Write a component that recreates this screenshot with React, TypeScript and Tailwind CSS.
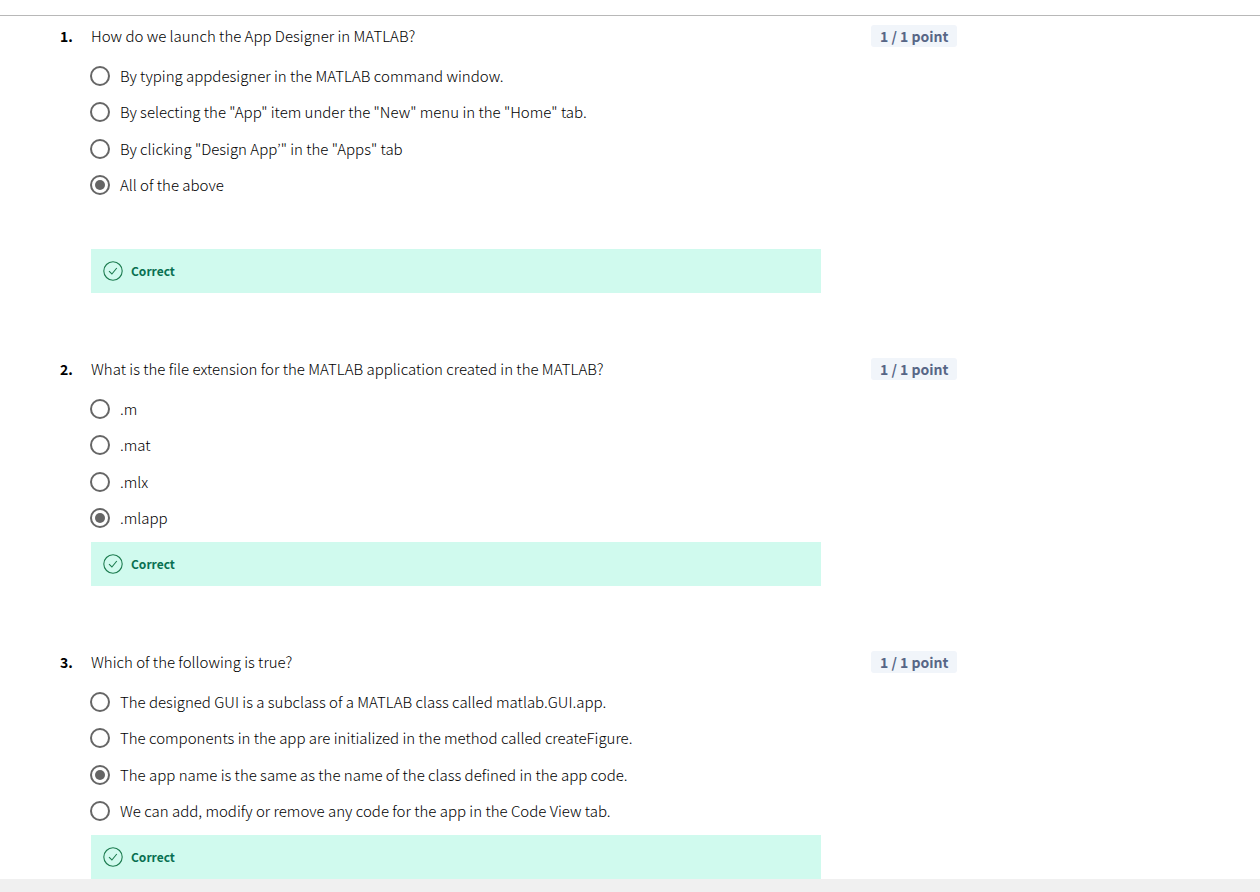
import React from 'react';

type Question = {
  prompt: string;
  options: string[];
  selected: number;
  spacious?: boolean;
};

const questions: Question[] = [
  {
    prompt: 'How do we launch the App Designer in MATLAB?',
    options: [
      'By typing appdesigner in the MATLAB command window.',
      'By selecting the "App" item under the "New" menu in the "Home" tab.',
      'By clicking "Design App’" in the "Apps" tab',
      'All of the above',
    ],
    selected: 3,
    spacious: true,
  },
  {
    prompt: 'What is the file extension for the MATLAB application created in the MATLAB?',
    options: ['.m', '.mat', '.mlx', '.mlapp'],
    selected: 3,
  },
  {
    prompt: 'Which of the following is true?',
    options: [
      'The designed GUI is a subclass of a MATLAB class called matlab.GUI.app.',
      'The components in the app are initialized in the method called createFigure.',
      'The app name is the same as the name of the class defined in the app code.',
      'We can add, modify or remove any code for the app in the Code View tab.',
    ],
    selected: 2,
  },
];

function CheckCircle() {
  return (
    <svg className="size-5 shrink-0" viewBox="0 0 20 20" fill="none" stroke="#1d7c50" aria-hidden="true">
      <circle cx="10" cy="10" r="9.2" strokeWidth="1.1" />
      <path d="M6 10.2 8.9 13 13.8 7" strokeWidth="1.1" />
    </svg>
  );
}

function QuestionBlock({ question, index }: { question: Question; index: number }) {
  return (
    <section className="grid grid-cols-[31px_minmax(0,730px)_auto] justify-start">
      <span className="text-[14px] leading-[22px] font-bold">{index + 1}.</span>
      <fieldset className="min-w-0">
        <legend className="text-[15px] leading-[22px] font-light">{question.prompt}</legend>
        <div className="mt-[11px] grid h-[145px] grid-rows-4">
          {question.options.map((option, i) => (
            <label key={option} className="-ml-px flex items-center gap-[10px] text-[15px] leading-[24px] font-light">
              <input
                type="radio"
                name={`question-${index + 1}`}
                defaultChecked={i === question.selected}
                className="grid size-5 shrink-0 appearance-none place-content-center rounded-full border-2 border-[#666666] bg-white before:size-[10px] before:rounded-full checked:before:bg-[#666666]"
              />
              <span>{option}</span>
            </label>
          ))}
        </div>
        <div
          className={`flex h-11 items-center gap-2 bg-[#d0faee] px-3 text-[12px] leading-5 font-bold text-[#087051] ${
            question.spacious ? 'mt-[46px]' : 'mt-[6px]'
          }`}
        >
          <CheckCircle />
          <span>Correct</span>
        </div>
      </fieldset>
      <span className="ml-[50px] h-[22px] rounded-[3px] bg-[#f1f5fa] px-[9px] text-[14px] leading-[22px] font-bold whitespace-nowrap text-[#576686]">
        1 / 1 point
      </span>
    </section>
  );
}

export default function App() {
  return (
    <div className="flex min-h-screen flex-col bg-white font-['Noto_Sans_CJK_KR',sans-serif] text-black">
      <header className="h-4 border-b border-[#b8b8b8]" />
      <main className="flex flex-col gap-[65px] pt-[9px] pl-[60px]">
        {questions.map((question, i) => (
          <QuestionBlock key={question.prompt} question={question} index={i} />
        ))}
      </main>
      <footer className="min-h-[13px] grow bg-[#f0f0f0]" />
    </div>
  );
}
